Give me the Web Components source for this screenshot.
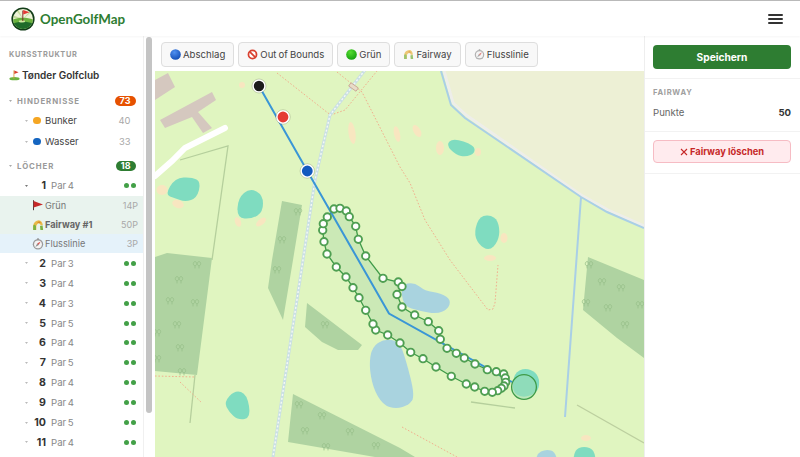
<!DOCTYPE html>
<html lang="de">
<head>
<meta charset="utf-8">
<title>OpenGolfMap</title>
<style>
html,body{margin:0;padding:0;height:100%;background:#fff;overflow:hidden}
body{font-family:Inter,"Liberation Sans",sans-serif;color:#333}
</style>
</head>
<body>
<ogm-app>
  <ogm-header slot="header">OpenGolfMap</ogm-header>
  <ogm-sidebar slot="side">
    <ogm-label>KURSSTRUKTUR</ogm-label>
    <ogm-course>Tønder Golfclub</ogm-course>
    <ogm-section count="73" color="#e65100" style="margin-top:9px">HINDERNISSE</ogm-section>
    <ogm-hazard color="#f5a623" count="40" style="margin-top:1px">Bunker</ogm-hazard>
    <ogm-hazard color="#1565c0" count="33">Wasser</ogm-hazard>
    <ogm-section count="18" color="#2e7d32" style="margin-top:6px">LÖCHER</ogm-section>
    <ogm-hole num="1" par="4" open style="margin-top:2px"></ogm-hole>
    <ogm-sub icon="flag" count="14P" tone="green">Grün</ogm-sub>
    <ogm-sub icon="fairway" count="50P" tone="green" strong>Fairway #1</ogm-sub>
    <ogm-sub icon="compass" count="3P" tone="blue">Flusslinie</ogm-sub>
    <ogm-hole num="2" par="3"></ogm-hole>
    <ogm-hole num="3" par="4"></ogm-hole>
    <ogm-hole num="4" par="3"></ogm-hole>
    <ogm-hole num="5" par="5"></ogm-hole>
    <ogm-hole num="6" par="4"></ogm-hole>
    <ogm-hole num="7" par="5"></ogm-hole>
    <ogm-hole num="8" par="4"></ogm-hole>
    <ogm-hole num="9" par="4"></ogm-hole>
    <ogm-hole num="10" par="5"></ogm-hole>
    <ogm-hole num="11" par="4"></ogm-hole>
  </ogm-sidebar>
  <ogm-toolbar slot="tools">
    <ogm-tool icon="blue">Abschlag</ogm-tool>
    <ogm-tool icon="ban">Out of Bounds</ogm-tool>
    <ogm-tool icon="green">Grün</ogm-tool>
    <ogm-tool icon="fairway">Fairway</ogm-tool>
    <ogm-tool icon="compass">Flusslinie</ogm-tool>
  </ogm-toolbar>
  <ogm-map slot="map"></ogm-map>
  <ogm-panel slot="panel"></ogm-panel>
</ogm-app>
<script>
const ICONS={
 flag:`<svg viewBox="0 0 12 12" width="12" height="12"><path d="M1.5 1.2v10" stroke="#5b3a3a" stroke-width="1"/><path d="M1.6 2 11 5.6 1.6 8.6z" fill="#c62828"/></svg>`,
 fairway:`<svg viewBox="0 0 12 12" width="12" height="12"><path d="M1.2 11V6.2C1.8 3 4 1.4 6.8 1.2 9 1.2 10.6 3.4 10.8 6l-2.2.5C8.3 5 7.4 4.2 6.4 4.4 5 4.8 4.4 6 4.3 7.4V11z" fill="#e9b949"/><path d="M1.2 11V6.6L3 5.6l1 1.6V11zM8.4 11 8 7l2.6-.6.5 4.6z" fill="#7cb342"/><path d="M5 3.4 7.4 2.2 9 4 7.4 4.2z" fill="#d98a2b"/></svg>`,
 compass:`<svg viewBox="0 0 12 12" width="12" height="12"><circle cx="6" cy="6.3" r="5.2" fill="#9a9a9a"/><circle cx="6" cy="6.3" r="3.9" fill="#f3f3f3"/><path d="M8.6 3.6 6.7 7 5.2 5.6z" fill="#d9534f"/><path d="M3.4 9 5.2 5.6 6.7 7z" fill="#8a8a8a"/><rect x="5.2" y=".3" width="1.6" height="1.3" fill="#8a8a8a"/></svg>`,
 ban:`<svg viewBox="0 0 12 12" width="11" height="11"><circle cx="6" cy="6" r="4.4" fill="#fff" stroke="#d9402f" stroke-width="1.9"/><path d="M2.9 2.9 9.1 9.1" stroke="#d9402f" stroke-width="1.9"/></svg>`,
 blue:`<svg viewBox="0 0 12 12" width="11" height="11"><defs><radialGradient id="b" cx=".4" cy=".3" r=".8"><stop offset="0" stop-color="#4f8ff0"/><stop offset="1" stop-color="#0d47b0"/></radialGradient></defs><circle cx="6" cy="6" r="5.8" fill="url(#b)"/></svg>`,
 green:`<svg viewBox="0 0 12 12" width="11" height="11"><defs><radialGradient id="g" cx=".4" cy=".3" r=".8"><stop offset="0" stop-color="#55dc30"/><stop offset="1" stop-color="#0f9a0c"/></radialGradient></defs><circle cx="6" cy="6" r="5.8" fill="url(#g)"/></svg>`,
 golf:`<svg viewBox="0 0 12 12" width="11" height="12"><ellipse cx="6" cy="10" rx="5.6" ry="1.7" fill="#6cb33f"/><path d="M5.4 1v9" stroke="#d9a441" stroke-width="1"/><path d="M5.8 1 10.4 3 5.8 5z" fill="#d9402f"/></svg>`
};
const CARET=(c="#999")=>`<svg viewBox="0 0 6 4" width="3" height="2" style="display:block"><path d="M0 0h6L3 4z" fill="${c}"/></svg>`;
function define(name,css,html){
  customElements.define(name,class extends HTMLElement{
    constructor(){super();this.attachShadow({mode:"open"});}
    connectedCallback(){
      const v=n=>this.getAttribute(n);
      this.shadowRoot.innerHTML=`<style>${css}</style>`+(typeof html==="function"?html(v,this):html);
    }
  });
}
define("ogm-app",`
 :host{display:grid;width:800px;height:457px;grid-template-columns:155px 1fr 156px;grid-template-rows:36px 35px 1fr;overflow:hidden;background:#fff}
 .h{grid-column:1/-1;grid-row:1;display:flex;min-width:0}
 .s{grid-column:1;grid-row:2/4;display:flex;min-height:0}
 .t{grid-column:2;grid-row:2;display:flex;min-width:0}
 .m{grid-column:2;grid-row:3;display:flex;min-width:0;min-height:0}
 .p{grid-column:3;grid-row:2/4;display:flex;min-height:0}
`,`<div class="h"><slot name="header"></slot></div><div class="s"><slot name="side"></slot></div><div class="t"><slot name="tools"></slot></div><div class="m"><slot name="map"></slot></div><div class="p"><slot name="panel"></slot></div>`);
define("ogm-header",`
 :host{display:flex;flex:1;align-items:center;box-sizing:border-box;height:36px;border-top:1px solid #b9b9b9;padding:0 17px 0 11px;background:#fff;gap:5px;box-shadow:0 1px 2px rgba(0,0,0,.04);position:relative;z-index:2}
 .n{font:700 13.4px Lato,"Open Sans",sans-serif;color:#2e7d32;flex:1}
 .b{width:15px;display:flex;flex-direction:column;gap:2.4px;margin-top:1px}
 .b i{display:block;height:1.9px;background:#333;border-radius:1px}
`,`<svg viewBox="0 0 24 24" width="24" height="24"><defs><clipPath id="c"><circle cx="12" cy="12" r="10"/></clipPath></defs><circle cx="12" cy="12" r="11.6" fill="#123d18"/><g clip-path="url(#c)"><rect width="24" height="24" fill="#eef3d8"/><path d="M12 12 4 2h3zM12 12 1 8v3zM12 12 20 3h3z" fill="#c7dc9f"/><path d="M1 13c6-3 16-3 22 0v11H1z" fill="#6cb33f"/><path d="M1 17c7-3 15-3 22 0v7H1z" fill="#1f6b2a"/><ellipse cx="11" cy="14.4" rx="3.2" ry="1.1" fill="#cfe8a0"/></g><path d="M11.8 14V3.6" stroke="#7a2020" stroke-width=".9"/><path d="M12.2 3 18.6 5.2 12.2 7.6z" fill="#e53935"/></svg><span class="n"><slot></slot></span><div class="b"><i></i><i></i><i></i></div>`);
define("ogm-sidebar",`
 :host{display:flex;flex:1;min-height:0;height:421px;overflow:hidden;background:#fff}
 .c{width:144px;flex:none;padding-top:14px;box-sizing:border-box;overflow:hidden;border-right:1px solid #f0f0f0;height:421px}
 .r{flex:1;padding:1px 2px 0 2px;box-sizing:border-box}
 .r i{display:block;width:6px;height:376px;background:#c4c4c4;border-radius:3px}
`,`<div class="c"><slot></slot></div><div class="r"><i></i></div>`);
define("ogm-label",`:host{display:block;height:10px;line-height:10px;padding-left:9px;font-size:7.4px;font-weight:700;letter-spacing:.62px;color:#9b9b9b}`,`<slot></slot>`);
define("ogm-course",`
 :host{display:flex;align-items:center;gap:2px;height:18px;margin-top:6px;padding-left:9px;font-size:10px;font-weight:600;color:#333}
 svg{display:block}`,()=>ICONS.golf+`<span><slot></slot></span>`);
define("ogm-section",`
 :host{display:flex;align-items:center;height:16px;padding:0 7.5px 0 9px;font-size:7.8px;font-weight:700;letter-spacing:.95px;color:#9a9a9a}
 .c{width:8px;flex:none}
 .t{flex:1}
 .b{color:#fff;font-size:9px;font-weight:700;letter-spacing:0;padding:0 5px;line-height:10px;height:10px;border-radius:5px}`,
 v=>`<span class="c">${CARET("#aaa")}</span><span class="t"><slot></slot></span><span class="b" style="background:${v("color")}">${v("count")}</span>`);
define("ogm-hazard",`
 :host{display:flex;align-items:center;height:21px;padding:0 12.5px 0 25px;font-size:9.6px;color:#444}
 .c{width:8px;flex:none}
 .d{width:7.5px;height:7.5px;border-radius:50%;margin-right:4.5px;flex:none}
 .t{flex:1}
 .n{color:#a8a8a8;font-size:9.4px}`,
 v=>`<span class="c">${CARET("#bbb")}</span><span class="d" style="background:${v("color")}"></span><span class="t"><slot></slot></span><span class="n">${v("count")}</span>`);
define("ogm-hole",`
 :host{display:flex;align-items:center;height:19.9px;padding:0 7.5px 0 25px;font-size:9.6px;color:#888;word-spacing:-1px}
 .c{width:8px;flex:none}
 .n{width:13px;text-align:right;font-weight:700;font-size:10.6px;color:#333;margin-right:5px;flex:none;white-space:nowrap;direction:rtl}
 .t{flex:1}
 .d{display:flex;gap:2px}
 .d i{display:block;width:5px;height:5px;border-radius:50%;background:#43a047}`,
 (v,el)=>`<span class="c">${CARET(el.hasAttribute("open")?"#777":"#bbb")}</span><span class="n">${v("num")}</span><span class="t">Par ${v("par")}</span><span class="d"><i></i><i></i></span>`);
define("ogm-sub",`
 :host{display:flex;align-items:center;height:19.2px;padding:0 5px 0 32px;font-size:9.2px;color:#777}
 :host([tone=green]){background:#e9f3ee}
 :host([tone=blue]){background:#e5f2fa}
 :host([strong]){font-weight:700;color:#666}
 svg{display:block;margin-right:1px}
 .t{flex:1;white-space:nowrap}
 .n{color:#a8a8a8;font-size:9px;font-weight:400}`,
 v=>ICONS[v("icon")]+`<span class="t"><slot></slot></span><span class="n">${v("count")}</span>`);
define("ogm-toolbar",`:host{display:flex;flex:1;align-items:flex-start;gap:4px;box-sizing:border-box;height:35px;padding:6px 0 0 6px;background:#fff}`,`<slot></slot>`);
define("ogm-tool",`
 :host{display:flex;align-items:center;gap:2px;height:25px;box-sizing:border-box;padding:0 8px;background:#f8f8f8;border:1px solid #dedede;border-radius:4px;font-size:9.6px;word-spacing:-.6px;color:#444;white-space:nowrap}
 :host([icon=fairway]) svg,:host([icon=compass]) svg{opacity:.75}
 svg{display:block;width:11px;height:11px}`,v=>ICONS[v("icon")]+`<span><slot></slot></span>`);
define("ogm-panel",`
 :host{display:block;flex:1;box-sizing:border-box;border-left:1px solid #eee;background:#fff;font-size:10px;color:#555}
 .a{padding:9px 9px 9px 8px;border-bottom:1px solid #f2f2f2}
 .s{display:flex;align-items:center;justify-content:center;height:24px;background:#2e7d32;color:#fff;font-weight:700;font-size:10.2px;border-radius:4px}
 .f{padding:9px 9px 10px 8px;border-bottom:1px solid #f2f2f2}
 .l{font-size:7.6px;font-weight:700;letter-spacing:.7px;color:#a0a0a0;line-height:10px}
 .r{display:flex;justify-content:space-between;margin-top:7px;line-height:16px;font-size:9.6px;color:#666}
 .r b{color:#333;font-weight:700;font-size:9.6px}
 .d{padding:8px 9px 10px 8px;border-bottom:1px solid #f2f2f2}
 .x{display:flex;align-items:center;justify-content:center;height:23px;box-sizing:border-box;background:#ffebee;border:1px solid #f6bcc4;border-radius:4px;color:#c62828;font-weight:700;font-size:9.3px;gap:2px}
 .x svg{display:block}
`,`<div class="a"><div class="s">Speichern</div></div>
 <div class="f"><div class="l">FAIRWAY</div><div class="r"><span>Punkte</span><b>50</b></div></div>
 <div class="d"><div class="x"><svg viewBox="0 0 8 8" width="8" height="8"><path d="M1 1l6 6M7 1 1 7" stroke="#c62828" stroke-width="1.1"/></svg><span>Fairway löschen</span></div></div>`);
const HANDLES=[[334,209],[340,208.3],[346.3,211],[349.3,216.7],[355.7,226.3],[358.3,239.3],[365.7,256],[383,278.3],[398.3,282],[402,286.5],[397,294.5],[402,307],[414.7,315],[428.3,321.7],[438.7,330.7],[440.3,339.3],[447,348.3],[456.3,353.3],[464.3,358],[475,364],[487.3,369.7],[496.3,371.7],[503.7,374],[505.3,378],[505.7,382.3],[504,386],[501.3,388.3],[497.7,390.7],[492.3,392.3],[484.7,391.3],[474.7,387],[466.3,384],[451.3,376.3],[436,367],[423,358.7],[410.7,352.3],[400,343],[387.7,335],[375.7,330],[373,324],[365.7,310.3],[359,297.7],[353,287.7],[346,277],[336.3,267],[327,254],[324,241.7],[322.7,230.3],[323.3,223.7],[327.3,217]];
const TREES=[[179,280],[170,301],[195,303],[177,325],[180,348],[157,333],[157,359],[182,372],[197,265],[277,270],[298,212],[282,240],[325,325],[299,405],[322,416],[305,431],[350,432],[376,446],[326,447],[602,282],[621,288],[586,303],[608,308],[640,305],[625,325],[589,265]];
const blob=(pts,fill)=>{
  let d="";const n=pts.length;
  for(let i=0;i<n;i++){
    const p=pts[i],q=pts[(i+1)%n];const mx=(p[0]+q[0])/2,my=(p[1]+q[1])/2;
    d+=(i?`Q${p[0]} ${p[1]} ${mx} ${my}`:`M${mx} ${my}`);
  }
  const p=pts[0],q=pts[1];d+=`Q${p[0]} ${p[1]} ${(p[0]+q[0])/2} ${(p[1]+q[1])/2}Z`;
  return `<path d="${d}" fill="${fill}"/>`;
};
const TEAL="#7fdcc0",WATER="#a9d3df",SAND="#f8e6c0",WOOD="#afd3a1";
const sand=[[242,85,3,3,0],[352,133,3.5,11,-8],[397,134,3,8,-12],[417,131,3.5,6.5,-30],[440,148,4,7,0],[478,152,3,4,0],[504,238,3.5,5,0],[490,258,6,3,0],[162,190,5.5,5,0],[178,204,6,4,20],[238,222,3,5,-20],[261,222,6,3,-40],[586,438,5,3,0]]
 .map(([x,y,a,b,r])=>`<ellipse cx="${x}" cy="${y}" rx="${a}" ry="${b}" transform="rotate(${r} ${x} ${y})" fill="${SAND}"/>`).join("");
define("ogm-map",`:host{display:block;flex:1;min-width:0;height:386px;overflow:hidden;background:#e0f5c0}svg{display:block}`,()=>`
<svg viewBox="155 71 489 386" width="489" height="386">
 <rect x="155" y="71" width="489" height="386" fill="#e0f5c0"/>
 <path d="M443 71 452 103 465 115 580 195 607 210 644 226V71z" fill="#edf0d5"/>
 <path d="M444 71 453 103 466 115 581 195 608 210 644 226" fill="none" stroke="#eeeeea" stroke-width="3"/>
 <path d="M441 71 451 105 465 118 581 197 607 212 644 228M581 197 565 417" fill="none" stroke="#a9cfe6" stroke-width="2"/>
 <g fill="none" stroke="#b5cf9c" stroke-width="1.3"><path d="M180 160 228 146 212 260"/><path d="M195 375 190 423"/><path d="M471 402 515 408"/><path d="M577 405 644 443" stroke="#bccf9f"/></g>
 <path d="M155 80 168 73 175 87 155 100zM160 120 212 92 216 100 198 112 212 128 203 133 192 117 165 128z" fill="#d5c8bf"/>
 <path d="M155 176 172 161 185 148 225 128" fill="none" stroke="#fff" stroke-width="6" stroke-linecap="round"/>
 <path d="M282 201 302 205 293 260 283 320 268 288 272 260zM155 257 167 253 212 258 197 375 155 371zM307 303 362 345 358 350 338 350 322 342 305 327zM293 394 400 448 415 457H375L288 442zM588 257 644 280V358L617 338 583 310z" fill="${WOOD}"/>
 <g fill="none" stroke="#98c08a" stroke-width=".8">${TREES.map(([x,y])=>`<path transform="translate(${x} ${y})" d="M-2 3.4V.8M-2 .8a1.7 2.1 0 1 1 .01 0M2 3.4V.8M2 .8a1.7 2.1 0 1 1 .01 0"/>`).join("")}</g>
 ${sand}
 ${blob([[165,195],[175,178],[192,177],[201,182],[197,198],[185,202],[175,198]],TEAL)}
 ${blob([[250,188],[263,195],[263,212],[252,219],[237,218],[238,198]],TEAL)}
 ${blob([[224,402],[235,390],[247,394],[251,418],[238,420],[229,412]],TEAL)}
 ${blob([[446,145],[453,138],[474,145],[475,153],[466,157],[456,155]],TEAL)}
 ${blob([[474,232],[480,215],[495,216],[500,228],[498,242],[489,251],[478,244]],TEAL)}
 ${blob([[514,373],[525,368],[536,372],[540,382],[537,393],[523,398],[512,392]],TEAL)}
 ${blob([[574,450],[584,446],[595,450],[596,470],[573,470]],TEAL)}
 ${blob([[401,285],[414,282],[425,291],[441,293],[451,300],[448,309],[437,314],[420,311],[403,306]],WATER)}
 ${blob([[384,339],[399,341],[406,360],[415,396],[409,405],[396,409],[383,405],[373,388],[369,365],[372,347]],WATER)}
 ${blob([[536,454],[546,449],[556,452],[558,470],[536,470]],WATER)}
 <g fill="none" stroke="#f1b08e" stroke-width="1" stroke-dasharray="1.6 1.8">
  <path d="M277 73 328 113 331 115 345 110 377 71"/>
  <path d="M337 72 362 92 400 167 410 183 425 220 450 260 488 310 493 309 495 303 498 265"/>
  <path d="M155 376 195 377M180 382 202 403"/>
  <path d="M402 427 457 457"/>
 </g>
 <path d="M365 70 330 115 315 180 303 260 273 457" fill="none" stroke="#c9dfe4" stroke-width="3"/>
 <path d="M365 70 330 115 315 180 303 260 273 457" fill="none" stroke="#f5f9f5" stroke-width="1.4" stroke-dasharray="2 2"/>
 <rect x="349" y="85" width="9" height="4" transform="rotate(35 353.5 87)" fill="#e8dcc8" stroke="#c8a090" stroke-width=".8"/>

 <path d="M${HANDLES.map(p=>p.join(" ")).join("L")}Z" fill="#cbe9b6" stroke="#3f9b48" stroke-width="1.3"/>
 <circle cx="524" cy="387" r="12.4" fill="#9cdcb4" fill-opacity=".55" stroke="#3f9b48" stroke-width="1.3"/>
 <path d="M259 86 307.3 171 389 313.5 512 382" fill="none" stroke="#3a96d6" stroke-width="2"/>
 <g fill="#fff" stroke="#4f9f52" stroke-width="1.9">${HANDLES.map(([x,y])=>`<circle cx="${x}" cy="${y}" r="3.7"/>`).join("")}</g>
 <g stroke="#fff" stroke-width="1.6">
  <circle cx="259" cy="86" r="6" fill="#1c1c1c"/>
  <circle cx="283" cy="117" r="6.2" fill="#e53935"/>
  <circle cx="307.3" cy="171" r="6.2" fill="#1259bf"/>
 </g>
 <g fill="none" stroke="rgba(0,0,0,.22)" stroke-width=".7">
  <circle cx="259" cy="86" r="7"/><circle cx="283" cy="117" r="7.2"/><circle cx="307.3" cy="171" r="7.2"/>
 </g>
</svg>`);
</script>
</body>
</html>
